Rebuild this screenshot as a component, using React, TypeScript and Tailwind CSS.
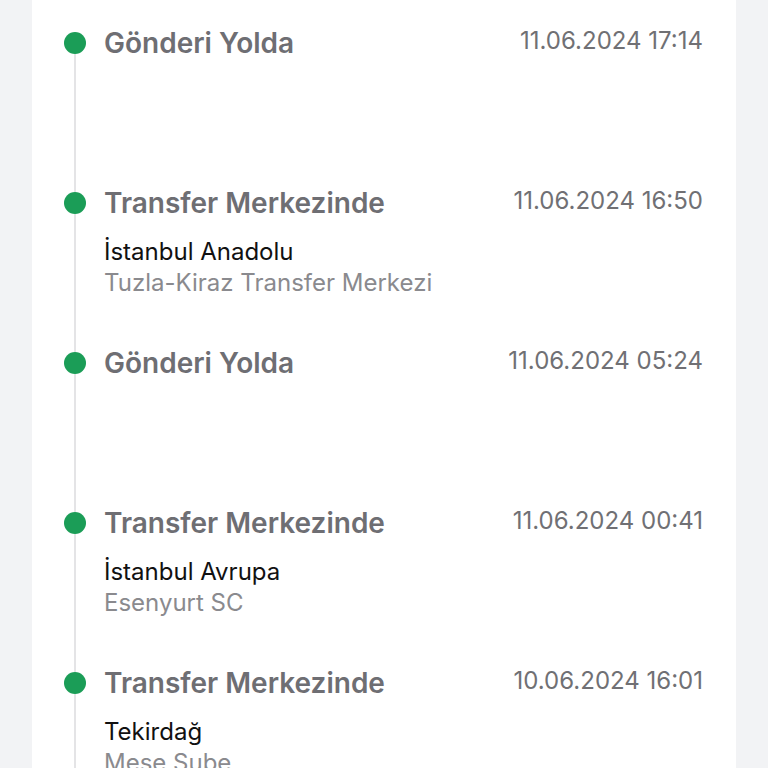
const EVENTS = [
  { title: 'Gönderi Yolda', date: '11.06.2024 17:14' },
  { title: 'Transfer Merkezinde', date: '11.06.2024 16:50', city: 'İstanbul Anadolu', place: 'Tuzla-Kiraz Transfer Merkezi' },
  { title: 'Gönderi Yolda', date: '11.06.2024 05:24' },
  { title: 'Transfer Merkezinde', date: '11.06.2024 00:41', city: 'İstanbul Avrupa', place: 'Esenyurt SC' },
  { title: 'Transfer Merkezinde', date: '10.06.2024 16:01', city: 'Tekirdağ', place: 'Mese Sube' },
]

export default function App() {
  return (
    <div
      className="h-[768px] overflow-hidden bg-[#f2f3f5] px-8"
      style={{ fontFamily: 'Inter, "Noto Sans", sans-serif' }}
    >
      <div className="h-full bg-white pl-[32px] pr-[33px]">
        {EVENTS.map((ev, i) => (
          <div key={i} className="flex h-[160px] shrink-0">
            {/* rail */}
            <div className="flex w-[22px] shrink-0 flex-col items-center">
              <div className={`h-[32px] w-[2px] ${i === 0 ? 'bg-transparent' : 'bg-[#e4e4e6]'}`} />
              <div className="h-[22px] w-[22px] shrink-0 rounded-full bg-[#1b9d57]" />
              <div className="w-[2px] flex-1 bg-[#e4e4e6]" />
            </div>

            {/* body */}
            <div className="ml-[18px] flex flex-1 flex-col pt-[26px]">
              <div className="flex items-start justify-between">
                <p className="text-[28px] font-semibold leading-[34px] text-[#6e6e73]">{ev.title}</p>
                <p className="text-[24px] leading-[30px] text-[#707074]">{ev.date}</p>
              </div>
              {ev.city && (
                <div className="mt-[16px]">
                  <p className="text-[24px] leading-[31px] text-[#111]">{ev.city}</p>
                  <p className="text-[24px] leading-[31px] text-[#8a8a8e]">{ev.place}</p>
                </div>
              )}
            </div>
          </div>
        ))}
      </div>
    </div>
  )
}
